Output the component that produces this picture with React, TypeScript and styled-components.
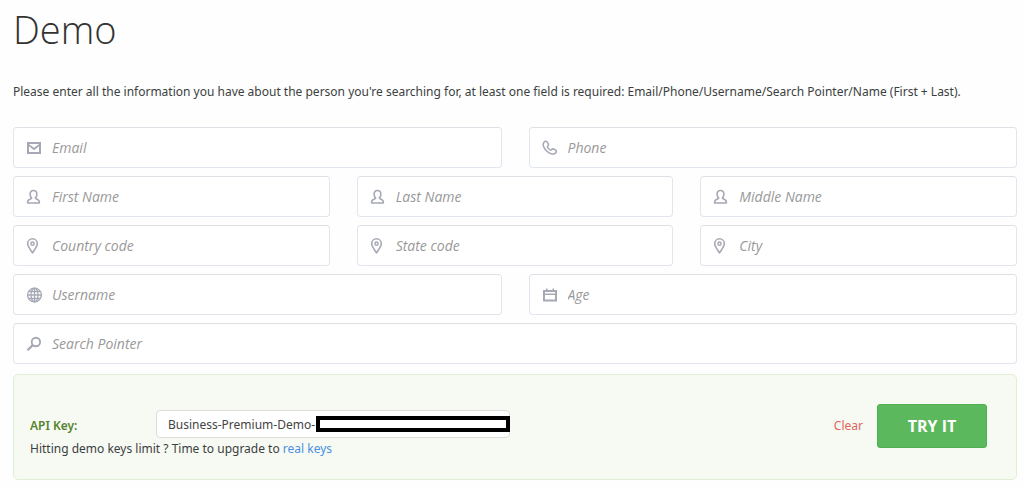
import React from "react";
import styled, { createGlobalStyle } from "styled-components";

const GlobalStyle = createGlobalStyle`
  *, *::before, *::after { box-sizing: border-box; }
  body {
    margin: 0;
    background: #fefefe;
    color: #3c3f3f;
    font-family: "Noto Sans", "Open Sans", sans-serif;
    font-size: 12px;
    line-height: 20px;
  }
`;

const Page = styled.main`
  padding: 5px 7px 7px 13px;
`;

const Title = styled.h1`
  margin: 0;
  font-family: "Open Sans", sans-serif;
  font-size: 38px;
  font-weight: 300;
  line-height: 48px;
  color: #333;
`;

const Intro = styled.p`
  margin: 29px 0 25px;
`;

const Row = styled.div<{ $columns: number }>`
  display: grid;
  grid-template-columns: repeat(${(p) => p.$columns}, minmax(0, 1fr));
  column-gap: 27px;
  margin-bottom: 8px;
`;

const FieldBox = styled.label`
  display: flex;
  align-items: center;
  gap: 10px;
  height: 41px;
  padding: 0 12px;
  border: 1px solid #e1e5ee;
  border-top-color: #dfe0e6;
  border-radius: 4px;
  background: #fff;
`;

const FieldInput = styled.input`
  flex: 1;
  min-width: 0;
  padding: 0;
  border: 0;
  outline: 0;
  background: transparent;
  color: #3c3f3f;
  font-family: "Open Sans", sans-serif;
  font-size: 14px;
  line-height: 20px;

  &::placeholder {
    color: #999;
    font-style: italic;
    opacity: 1;
  }
`;

const Icon = styled.svg`
  flex: none;
  width: 16px;
  height: 16px;
  fill: none;
  stroke: #a6a9b5;
  stroke-width: 2;
`;

const Panel = styled.section`
  display: flex;
  align-items: flex-start;
  justify-content: space-between;
  margin-top: 10px;
  padding: 29px 29px 20px 16px;
  border: 1px solid #e0efd4;
  border-radius: 5px;
  background: #f7faf3;
`;

const KeyGroup = styled.div`
  margin-top: 6px;
`;

const KeyRow = styled.div`
  display: flex;
  align-items: center;
`;

const KeyLabel = styled.label`
  width: 126px;
  padding-top: 3px;
  color: #54842f;
  font-weight: 600;
`;

const KeyField = styled.div`
  position: relative;
  width: 354px;
`;

const KeyInput = styled.input`
  display: block;
  width: 100%;
  height: 28px;
  padding: 0 11px;
  border: 1px solid #dcdedb;
  border-radius: 4px;
  background: #fff;
  color: #444;
  font-family: inherit;
  font-size: 12px;
`;

const Redaction = styled.span`
  position: absolute;
  top: 6px;
  right: 0;
  width: 194px;
  height: 16px;
  border: 4px solid #000;
  background: #fff;
`;

const Hint = styled.p`
  margin: 1px 0 0;
`;

const Link = styled.a`
  color: #4a90e2;
  text-decoration: none;
`;

const Actions = styled.div`
  display: flex;
  align-items: center;
  gap: 14px;
`;

const ClearButton = styled.button`
  padding: 0;
  border: 0;
  background: transparent;
  color: #e0645c;
  font-family: inherit;
  font-size: 12px;
  line-height: 20px;
`;

const SubmitButton = styled.button`
  width: 110px;
  height: 44px;
  padding: 0;
  border: 1px solid #50b152;
  border-radius: 3px;
  background: #5cb85c;
  color: #fff;
  font-family: "Open Sans", sans-serif;
  font-size: 16px;
  font-weight: 700;
`;

const icons = {
  mail: (
    <>
      <path d="M2 3h12v10H2z" />
      <path d="M2 4.400l6 4.600 6-4.600" strokeWidth="1.800" />
    </>
  ),
  phone: (
    <path
      strokeWidth="1.5"
      strokeLinejoin="round"
      d="M2.2 2c.9-.9 2.300-.9 3 .1l1 1.600c.5.9.3 1.800-.5 2.400-.4.4-.4.8-.1 1.300.7 1.100 1.600 1.900 2.700 2.500.5.3.9.2 1.300-.2.6-.8 1.500-1 2.400-.5l1.400.8c1.100.7 1.300 1.800.5 2.700-1.200 1.300-3.200 1.700-5.200.9C5.500 12.500 2.800 9.800 1.600 6.600c-.6-1.700-.5-3.500.6-4.600z"
    />
  ),
  person: (
    <path
      strokeLinejoin="round"
      strokeWidth="1.6"
      d="M7.500 1.500c-2.300 0-3.400 1.600-3.400 3.700 0 1.600.7 2.900 1.600 3.800-.2.600-1 .900-1.900 1.200-1.500.5-2.200 1.400-2.200 3.800h11.800c0-2.400-.7-3.300-2.200-3.800-.9-.3-1.700-.6-1.900-1.200.9-.9 1.600-2.200 1.600-3.800 0-2.100-1.100-3.700-3.400-3.700z"
    />
  ),
  pin: (
    <>
      <path
        strokeWidth="1.6"
        strokeLinejoin="round"
        d="M6.500 15C5.200 12.500 1.700 9 1.700 5.600a4.800 4.800 0 0 1 9.600 0c0 3.400-3.500 6.900-4.800 9.400z"
      />
      <circle cx="6.500" cy="5.700" r="1.600" strokeWidth="1.500" />
    </>
  ),
  globe: (
    <g strokeWidth="1.300">
      <circle cx="8.500" cy="8" r="6.900" />
      <ellipse cx="8.500" cy="8" rx="3.500" ry="6.900" />
      <path d="M8.500 1v14M1.600 8h13.800M2.800 4.500h11.400M2.800 11.500h11.400" />
    </g>
  ),
  calendar: (
    <>
      <path d="M2 4h12v9.500H2z" />
      <path d="M2 7.200h12M4.700 1.500v2.500M11.300 1.500v2.500" strokeWidth="1.600" />
    </>
  ),
  search: (
    <>
      <circle cx="9.900" cy="6" r="4.200" strokeWidth="1.900" />
      <path d="M6.800 9.100L1.500 14.200" strokeWidth="2.200" />
    </>
  ),
};

type FieldProps = { icon: keyof typeof icons; name: string; type?: string };

function Field({ icon, name, type = "text" }: FieldProps) {
  return (
    <FieldBox>
      <Icon viewBox="0 0 16 16" aria-hidden="true">
        {icons[icon]}
      </Icon>
      <FieldInput type={type} placeholder={name} aria-label={name} />
    </FieldBox>
  );
}

const rows: FieldProps[][] = [
  [
    { icon: "mail", name: "Email", type: "email" },
    { icon: "phone", name: "Phone", type: "tel" },
  ],
  [
    { icon: "person", name: "First Name" },
    { icon: "person", name: "Last Name" },
    { icon: "person", name: "Middle Name" },
  ],
  [
    { icon: "pin", name: "Country code" },
    { icon: "pin", name: "State code" },
    { icon: "pin", name: "City" },
  ],
  [
    { icon: "globe", name: "Username" },
    { icon: "calendar", name: "Age" },
  ],
  [{ icon: "search", name: "Search Pointer" }],
];

export default function App() {
  return (
    <Page>
      <GlobalStyle />
      <Title>Demo</Title>
      <Intro>
        Please enter all the information you have about the person you're searching for, at least
        one field is required: Email/Phone/Username/Search Pointer/Name (First + Last).
      </Intro>
      <form onSubmit={(e) => e.preventDefault()}>
        {rows.map((fields) => (
          <Row key={fields[0].name} $columns={fields.length}>
            {fields.map((field) => (
              <Field key={field.name} {...field} />
            ))}
          </Row>
        ))}
        <Panel>
          <KeyGroup>
            <KeyRow>
              <KeyLabel htmlFor="api-key">API Key:</KeyLabel>
              <KeyField>
                <KeyInput id="api-key" type="text" defaultValue="Business-Premium-Demo-" />
                <Redaction />
              </KeyField>
            </KeyRow>
            <Hint>
              Hitting demo keys limit ? Time to upgrade to <Link href="#keys">real keys</Link>
            </Hint>
          </KeyGroup>
          <Actions>
            <ClearButton type="reset">Clear</ClearButton>
            <SubmitButton type="submit">TRY IT</SubmitButton>
          </Actions>
        </Panel>
      </form>
    </Page>
  );
}
